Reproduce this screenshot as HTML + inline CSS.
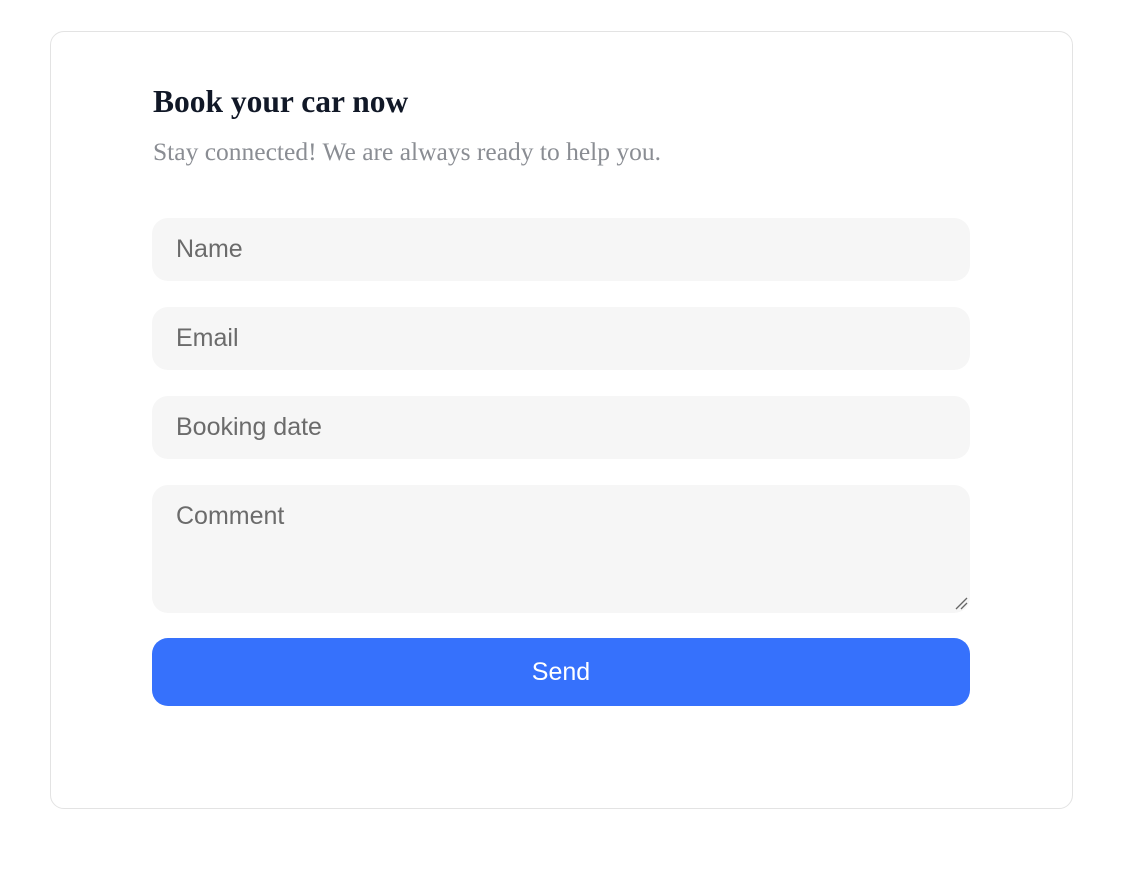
<!DOCTYPE html>
<html><head><style>
body{margin:0;background:#fff;width:1138px;height:880px;position:relative;font-family:"Liberation Sans",sans-serif}
.card{position:absolute;left:50px;top:31px;width:1021px;height:776px;border:1px solid #e3e3e3;border-radius:14px}
.h{position:absolute;left:153px;top:82px;font:bold 31.5px "Liberation Serif",serif;color:#111827;margin:0;line-height:40px}
.s{position:absolute;left:153px;top:136px;font:25.5px "Liberation Serif",serif;color:#8a8d93;line-height:32px}
.f{position:absolute;left:152px;width:818px;height:63px;background:#f6f6f6;border-radius:16px;box-sizing:border-box;padding-left:24px;font-size:25px;color:#6b6b6b;line-height:63px}
.b{position:absolute;left:152px;top:638px;width:818px;height:68px;background:#3671fc;border-radius:16px;color:#fff;font-size:25px;text-align:center;line-height:68px}
</style></head><body>
<div class="card"></div>
<h1 class="h">Book your car now</h1>
<div class="s">Stay connected! We are always ready to help you.</div>
<div class="f" style="top:218px">Name</div>
<div class="f" style="top:307px">Email</div>
<div class="f" style="top:396px">Booking date</div>
<div class="f" style="top:485px;height:128px;line-height:63px">Comment
<svg style="position:absolute;right:2px;bottom:3px" width="14" height="14"><path d="M2 13L13 2M7 13L13 7" stroke="#666" stroke-width="1.3"/></svg></div>
<div class="b">Send</div>
</body></html>
